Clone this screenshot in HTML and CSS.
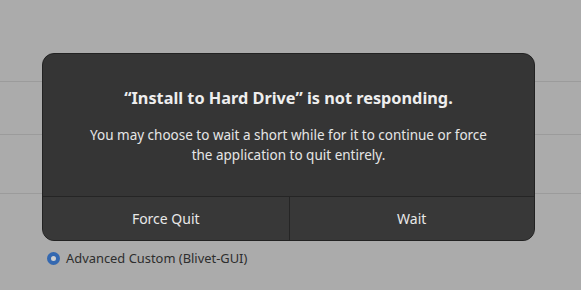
FILE: index.html
```html
<!DOCTYPE html>
<html>
<head>
<meta charset="utf-8">
<link rel="stylesheet" href="styles.css">
</head>
<body>
<div class="page">
  <div class="list">
    <div class="row r1"></div>
    <div class="row r2"></div>
    <div class="row r3"></div>
  </div>
  <label class="option">
    <span class="radio"></span>
    <span class="option-label">Advanced Custom (Blivet-GUI)</span>
  </label>

  <div class="dialog">
    <div class="dialog-body">
      <h1 class="title">“Install to Hard Drive” is not responding.</h1>
      <p class="message">You may choose to wait a short while for it to continue or force the application to quit entirely.</p>
    </div>
    <div class="actions">
      <button class="action">Force Quit</button>
      <button class="action">Wait</button>
    </div>
  </div>
</div>
</body>
</html>
```
FILE: styles.css
```css
html, body {
  margin: 0;
  padding: 0;
  background: #ababab;
  font-family: "Noto Sans", "Open Sans", sans-serif;
}
.page {
  position: relative;
  width: 581px;
  height: 290px;
  overflow: hidden;
}
.list {
  padding-top: 81px;
}
.row {
  border-top: 1px solid #9b9b9b;
}
.r1 { height: 52px; }
.r2 { height: 58px; }
.r3 { height: 55px; }
.option {
  display: flex;
  align-items: center;
  gap: 6px;
  padding-left: 47px;
  height: 18px;
}
.radio {
  box-sizing: border-box;
  width: 13px;
  height: 13px;
  border-radius: 50%;
  border: 4px solid #3468b0;
  background: #d0d0d0;
}
.option-label {
  font-size: 12.9px;
  color: #2e2e2e;
}
.dialog {
  position: absolute;
  left: 42px;
  top: 53px;
  width: 491px;
  height: 186px;
  border: 1px solid #222;
  border-radius: 12px;
  background: #353535;
  overflow: hidden;
  display: flex;
  flex-direction: column;
}
.dialog-body {
  flex: 1;
  display: flex;
  flex-direction: column;
  align-items: center;
  padding-top: 34px;
}
.title {
  margin: 0;
  font-size: 16.3px;
  font-weight: bold;
  color: #eeeeee;
  line-height: 20px;
}
.message {
  margin: 17px 0 0;
  width: 420px;
  text-align: center;
  font-size: 13.5px;
  line-height: 20px;
  color: #e6e6e6;
}
.actions {
  display: grid;
  grid-template-columns: 1fr 1fr;
  height: 43px;
  border-top: 1px solid #252525;
}
.action {
  background: #383838;
  border: none;
  color: #e8e8e8;
  font-family: inherit;
  font-size: 14px;
  padding: 0;
}
.action + .action {
  border-left: 1px solid #252525;
}
```
